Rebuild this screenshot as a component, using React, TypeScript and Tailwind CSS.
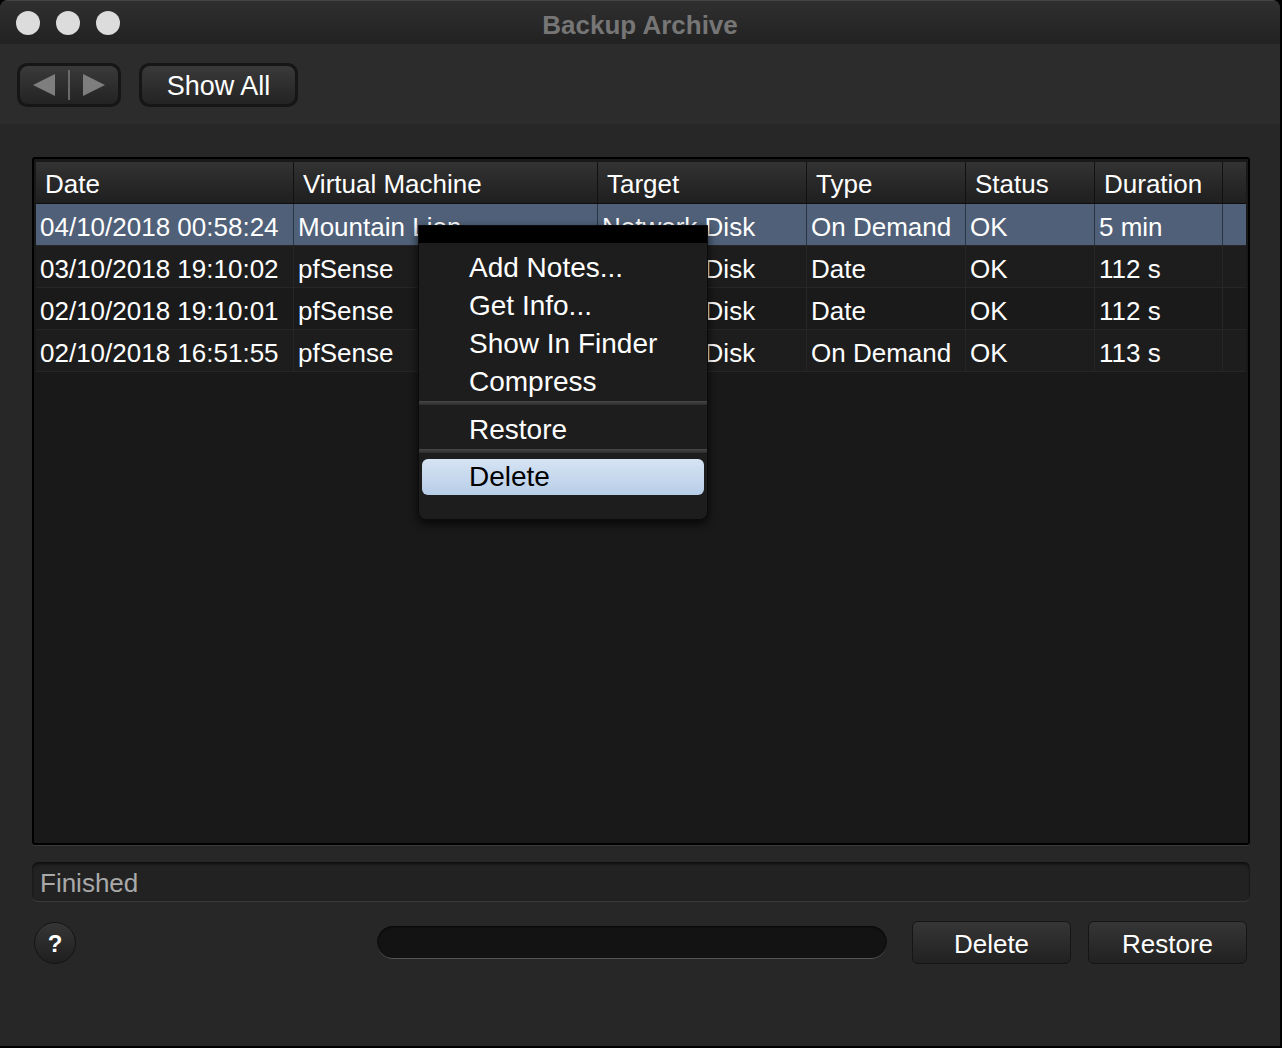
import React from "react";

const cols = [258, 304, 209, 159, 129, 128];
const headers = ["Date", "Virtual Machine", "Target", "Type", "Status", "Duration"];
const rows = [
  ["04/10/2018 00:58:24", "Mountain Lion", "Network Disk", "On Demand", "OK", "5 min"],
  ["03/10/2018 19:10:02", "pfSense", "Network Disk", "Date", "OK", "112 s"],
  ["02/10/2018 19:10:01", "pfSense", "Network Disk", "Date", "OK", "112 s"],
  ["02/10/2018 16:51:55", "pfSense", "Network Disk", "On Demand", "OK", "113 s"],
];

function Sep() {
  return (
    <div className="h-[10px] flex flex-col">
      <div className="h-[4px] bg-gradient-to-b from-[#474747] to-[#2c2c2c]" />
      <div className="flex-1" />
    </div>
  );
}

export default function App() {
  return (
    <div
      className="w-[1282px] h-[1048px] bg-black overflow-hidden relative"
      style={{ fontFamily: '"Liberation Sans", Arial, Helvetica, sans-serif' }}
    >
      <div className="w-[1280px] h-[1046px] rounded-tl-[8px] rounded-tr-[8px] overflow-hidden flex flex-col bg-[#282828]">
        {/* Title bar */}
        <div className="h-[44px] relative flex items-center bg-gradient-to-b from-[#2f2f2f] to-[#222222] border-t border-[#444]">
          <div className="flex gap-[16px] pl-[16px]">
            <div className="w-[24px] h-[24px] rounded-full bg-[#dcdcdc]" />
            <div className="w-[24px] h-[24px] rounded-full bg-[#dcdcdc]" />
            <div className="w-[24px] h-[24px] rounded-full bg-[#dcdcdc]" />
          </div>
          <div className="absolute inset-0 flex items-center justify-center text-[26px] font-bold text-[#767676] pt-[5px]">
            Backup Archive
          </div>
        </div>
        {/* Toolbar */}
        <div className="h-[80px] bg-[#2c2c2c] flex items-center pl-[17px] gap-[18px] pt-[2px]">
          <div className="w-[104px] h-[44px] rounded-[10px] bg-[#161616] p-[3px]">
            <div className="w-full h-full rounded-[8px] bg-gradient-to-b from-[#3a3a3a] to-[#232323] flex items-center">
              <div className="flex-1 flex items-center justify-center">
                <svg width="24" height="24" viewBox="0 0 24 24"><polygon points="23,1 23,23 1,12" fill="#7e7e7e" /></svg>
              </div>
              <div className="w-[2px] h-[30px] bg-[#6a6a6a]" />
              <div className="flex-1 flex items-center justify-center">
                <svg width="24" height="24" viewBox="0 0 24 24"><polygon points="1,1 1,23 23,12" fill="#7e7e7e" /></svg>
              </div>
            </div>
          </div>
          <div className="w-[159px] h-[44px] rounded-[10px] bg-[#161616] p-[3px]">
            <div className="w-full h-full rounded-[8px] bg-gradient-to-b from-[#3a3a3a] to-[#232323] flex items-center justify-center text-white text-[27px] pt-[2px]">
              Show All
            </div>
          </div>
        </div>
        {/* Content */}
        <div className="flex-1 bg-[#272727] px-[32px] pt-[33px] flex flex-col">
          <div className="h-[688px] w-[1218px] border-2 border-black bg-[#191919] rounded-[3px] p-[2px] pt-[3px] flex flex-col relative shadow-[0_1px_0_#3a3a3a]">
            {/* header */}
            <div className="flex h-[42px] bg-gradient-to-b from-[#333333] to-[#1f1f1f] border-b border-[#0e0e0e]">
              {headers.map((h, i) => (
                <div
                  key={h}
                  style={{ width: cols[i] }}
                  className="h-full flex items-center pl-[9px] pt-[4px] text-white text-[26px] border-r border-[#111] whitespace-nowrap overflow-hidden"
                >
                  {h}
                </div>
              ))}
              <div className="flex-1" />
            </div>
            {rows.map((r, ri) => (
              <div
                key={ri}
                className={`flex h-[42px] border-b border-[#262626] ${ri === 0 ? "bg-[#4f6078]" : ri % 2 === 1 ? "bg-[#1d1d1d]" : "bg-[#1a1a1a]"}`}
              >
                {r.map((c, i) => (
                  <div
                    key={i}
                    style={{ width: cols[i] }}
                    className={`h-full flex items-center pl-[4px] pt-[6px] text-white text-[26px] border-r whitespace-nowrap overflow-hidden ${ri === 0 ? "border-[#2a3444]" : "border-[#262626]"}`}
                  >
                    {c}
                  </div>
                ))}
                <div className="flex-1" />
              </div>
            ))}
            {/* context menu */}
            <div className="absolute left-[384px] top-[66px] w-[290px] h-[295px] rounded-b-[8px] bg-[#1d1d1d] shadow-[0_4px_10px_rgba(0,0,0,0.7)] border border-[#0c0c0c] overflow-hidden flex flex-col">
              <div className="h-[17px] bg-black" />
              <div className="pt-[6px] flex flex-col">
                {["Add Notes...", "Get Info...", "Show In Finder", "Compress"].map((t) => (
                  <div key={t} className="h-[38px] flex items-center pl-[50px] text-white text-[28px]">
                    {t}
                  </div>
                ))}
                <Sep />
                <div className="h-[38px] flex items-center pl-[50px] text-white text-[28px]">Restore</div>
                <Sep />
                <div className="mx-[3px] h-[36px] rounded-[6px] bg-gradient-to-b from-[#d6e4f4] to-[#b7cde7] flex items-center pl-[47px] text-black text-[28px]">
                  Delete
                </div>
              </div>
            </div>
          </div>
          {/* status */}
          <div className="mt-[17px] h-[40px] w-[1218px] rounded-[6px] bg-[#222222] shadow-[inset_0_2px_3px_rgba(0,0,0,0.6)] border-b border-[#3a3a3a] flex items-center pl-[8px] pt-[4px] text-[#a9a9a9] text-[26px]">
            Finished
          </div>
          {/* bottom */}
          <div className="mt-[19px] h-[43px] flex items-center">
            <div className="ml-[2px] w-[42px] h-[42px] rounded-full bg-gradient-to-b from-[#363636] to-[#1f1f1f] border border-[#141414] flex items-center justify-center text-white text-[24px] font-bold pt-[2px]">
              ?
            </div>
            <div className="ml-[301px] w-[510px] h-[33px] rounded-full bg-[#131313] border-b border-[#555] shadow-[inset_0_1px_2px_rgba(0,0,0,0.8)]" />
            <div className="ml-[25px] w-[159px] h-[43px] rounded-[6px] bg-gradient-to-b from-[#363636] to-[#212121] border border-[#151515] flex items-center justify-center text-white text-[26px] pt-[3px]">
              Delete
            </div>
            <div className="ml-[17px] w-[159px] h-[43px] rounded-[6px] bg-gradient-to-b from-[#363636] to-[#212121] border border-[#151515] flex items-center justify-center text-white text-[26px] pt-[3px]">
              Restore
            </div>
          </div>
        </div>
      </div>
    </div>
  );
}
